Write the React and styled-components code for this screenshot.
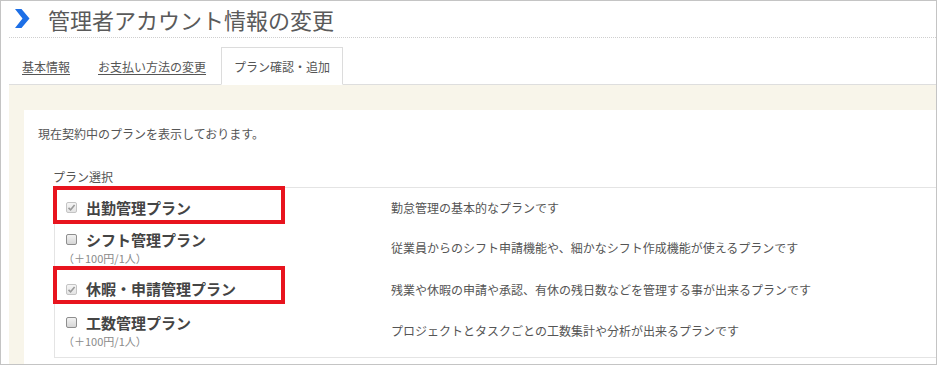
import React from 'react';
import styled, { createGlobalStyle } from 'styled-components';

const GlobalStyle = createGlobalStyle`
    body {
        margin: 0;
        background: #fff;
        font-family: "Noto Sans CJK JP", "Noto Sans", sans-serif;
        color: #555;
    }
`

const plans = [
    { name: '出勤管理プラン', desc: '勤怠管理の基本的なプランです', checked: true, marked: true, h: 39 },
    { name: 'シフト管理プラン', desc: '従業員からのシフト申請機能や、細かなシフト作成機能が使えるプランです', price: '（＋100円/1人）', h: 41 },
    { name: '休暇・申請管理プラン', desc: '残業や休暇の申請や承認、有休の残日数などを管理する事が出来るプランです', checked: true, marked: true, h: 42 },
    { name: '工数管理プラン', desc: 'プロジェクトとタスクごとの工数集計や分析が出来るプランです', price: '（＋100円/1人）', h: 41 },
];

function Chevron() {
    return (
        <svg width="16" height="19" viewBox="0 0 16 19">
            <polygon points="1,0 7.5,0 15.5,9.5 7.5,19 1,19 8.5,9.5" fill="#1d6fe6" />
        </svg>
    )
}

function PlanRow({ plan }) {
    return (
        <Row $h={plan.h}>
            <NameCell>
                <NameLine>
                    <Check $checked={plan.checked}>
                        {plan.checked && (
                            <svg width="9" height="9" viewBox="0 0 9 9">
                                <path d="M1.5 4.8 L3.6 6.8 L7.6 2" stroke="#9a9a9a" strokeWidth="1.6" fill="none" />
                            </svg>
                        )}
                    </Check>
                    <PlanName>{plan.name}</PlanName>
                </NameLine>
                {plan.price && <Price>{plan.price}</Price>}
            </NameCell>
            <Desc>{plan.desc}</Desc>
            {plan.marked && <Marker />}
        </Row>
    )
}

function App() {
    return (
        <>
            <GlobalStyle />
            <Frame>
                <Header>
                    <Chevron />
                    <Title>管理者アカウント情報の変更</Title>
                </Header>
                <Tabs>
                    <Tab>基本情報</Tab>
                    <Tab>お支払い方法の変更</Tab>
                    <Tab $active>プラン確認・追加</Tab>
                </Tabs>
                <Body>
                    <Panel>
                        <Intro>現在契約中のプランを表示しております。</Intro>
                        <SectionLabel>プラン選択</SectionLabel>
                        <PlanTable>
                            {plans.map((p) => <PlanRow key={p.name} plan={p} />)}
                        </PlanTable>
                    </Panel>
                </Body>
            </Frame>
        </>
    )
}

const Frame = styled.div`
    width: 937px;
    height: 365px;
    box-sizing: border-box;
    border: 1px solid #c4c4c4;
    padding-left: 8px;
    overflow: hidden;
    display: flex;
    flex-direction: column;
`

const Header = styled.header`
    height: 36px;
    flex-shrink: 0;
    display: flex;
    align-items: center;
    padding-left: 5px;
    border-bottom: 1px dotted #cfcfcf;
    svg { margin-right: 18px; margin-top: -1px; }
`

const Title = styled.h1`
    margin: 0;
    font-size: 22px;
    font-weight: normal;
    color: #5a5a5a;
    line-height: 1;
`

const Tabs = styled.nav`
    display: flex;
    align-items: flex-end;
    gap: 2px;
    height: 47px;
    flex-shrink: 0;
    box-sizing: border-box;
    border-bottom: 1px solid #dedede;
    position: relative;
`

const Tab = styled.a`
    height: 38px;
    box-sizing: border-box;
    display: flex;
    align-items: center;
    padding: 0 12px;
    margin-bottom: -1px;
    font-size: 12px;
    color: #555;
    border: 1px solid ${p => p.$active ? '#dcdcdc' : 'transparent'};
    border-bottom-color: ${p => p.$active ? '#fff' : 'transparent'};
    background: ${p => p.$active ? '#fff' : 'transparent'};
    text-decoration: ${p => p.$active ? 'none' : 'underline'};
    text-underline-offset: 2px;
`

const Body = styled.main`
    flex: 1;
    background: #f8f5ea;
    padding: 25px 0 0 15px;
    display: flex;
`

const Panel = styled.section`
    flex: 1;
    background: #fff;
    padding: 15px 0 0 14px;
`

const Intro = styled.p`
    margin: 0;
    font-size: 12px;
    line-height: 18px;
    color: #555;
`

const SectionLabel = styled.div`
    margin: 25px 0 0 15px;
    font-size: 12px;
    line-height: 18px;
    color: #555;
`

const PlanTable = styled.div`
    margin: 1px -20px 0 16px;
    border: 1px solid #e4e4e4;
    padding-bottom: 6px;
`

const Row = styled.div`
    position: relative;
    height: ${p => p.$h}px;
    display: grid;
    grid-template-columns: 322px 1fr;
    align-items: center;
`

const NameCell = styled.div`
    padding-left: 11px;
    display: flex;
    flex-direction: column;
`

const NameLine = styled.div`
    display: flex;
    align-items: center;
    gap: 9px;
`

const Check = styled.span`
    width: 11px;
    height: 11px;
    box-sizing: border-box;
    border-radius: 2px;
    border: 1px solid ${p => p.$checked ? '#c4c4c4' : '#8e8e8e'};
    background: ${p => p.$checked ? 'linear-gradient(#f5f5f5, #e4e4e4)' : 'linear-gradient(#f2f2f2, #d6d6d6)'};
    display: flex;
    align-items: center;
    justify-content: center;
`

const PlanName = styled.span`
    font-size: 15px;
    font-weight: bold;
    line-height: 18px;
    color: #444;
`

const Price = styled.span`
    margin: 3px 0 0 -3px;
    font-size: 11px;
    line-height: 13px;
    color: #8a8a8a;
`

const Desc = styled.div`
    padding-left: 14px;
    font-size: 12px;
    color: #555;
`

const Marker = styled.span`
    position: absolute;
    left: -2px;
    top: -2px;
    width: 232px;
    height: 38px;
    box-sizing: border-box;
    border: 4px solid #e8141e;
    pointer-events: none;
`

export default App
